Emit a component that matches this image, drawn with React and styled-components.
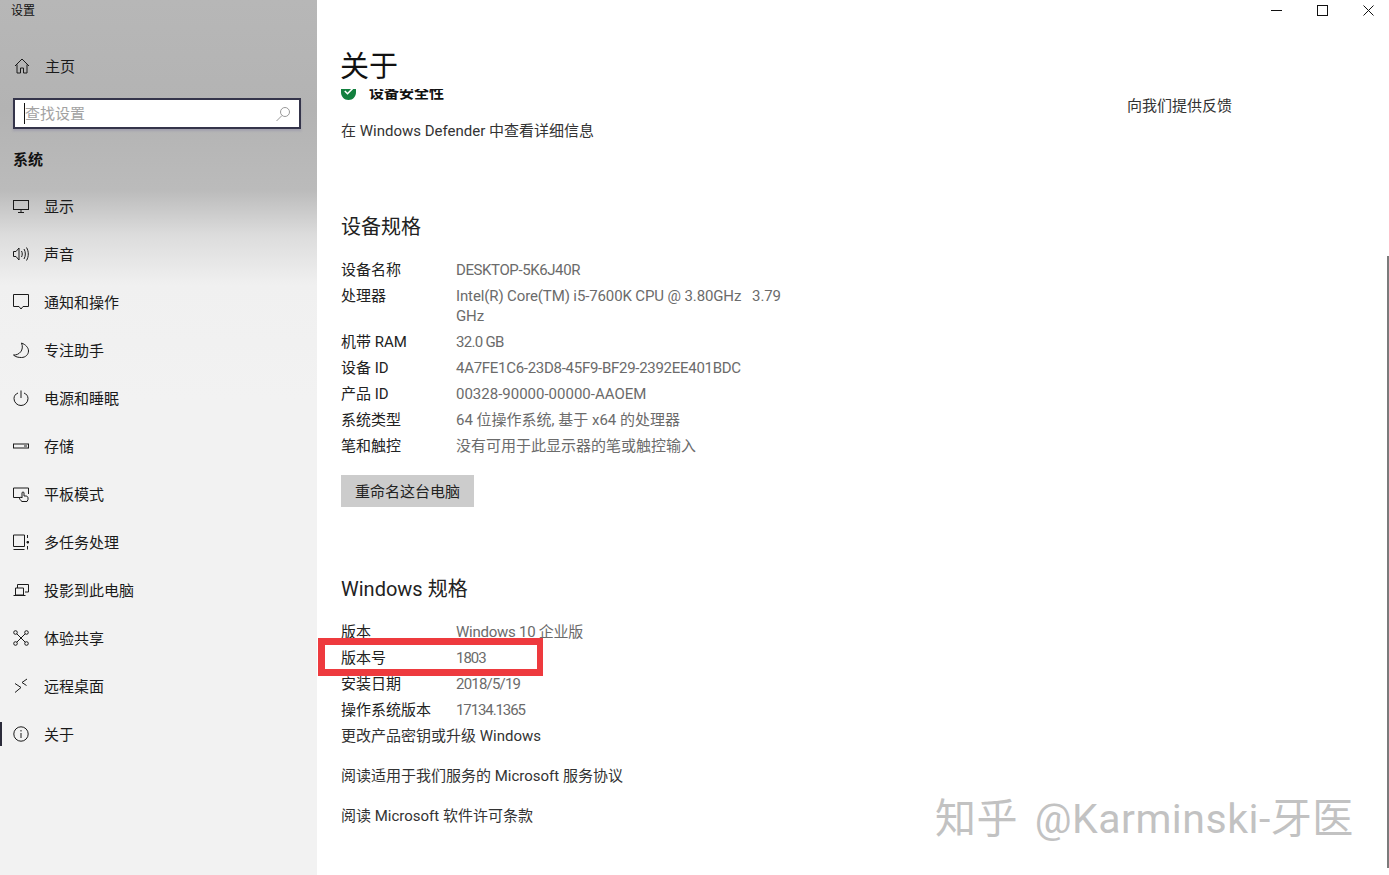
import styled, { createGlobalStyle } from "styled-components";

const GlobalStyle = createGlobalStyle`
  html, body {
    margin: 0;
    padding: 0;
    background: #fff;
  }
  body {
    font-family: "Roboto", "Noto Sans CJK SC", sans-serif;
    font-size: 15px;
    color: #222;
  }
`;

const Window = styled.div`
  position: relative;
  display: flex;
  width: 1389px;
  height: 875px;
  overflow: hidden;
  background: #fff;
`;

const Sidebar = styled.aside`
  width: 317px;
  flex: none;
  background: linear-gradient(
    180deg,
    #b7b7b7 0,
    #b3b3b3 110px,
    #bbb 190px,
    #dcdcdc 235px,
    #f0f0f0 285px,
    #f2f2f2 400px
  );
`;

const AppTitle = styled.div`
  height: 20px;
  padding-left: 11px;
  font-size: 12px;
  line-height: 22px;
  color: #111;
`;

const NavRow = styled.div`
  position: relative;
  display: flex;
  align-items: center;
  gap: 15px;
  height: 48px;
  padding-left: 13px;
  color: #1a1a1a;
  line-height: 20px;

  &::before {
    content: "";
    display: ${(p) => (p.$active ? "block" : "none")};
    position: absolute;
    left: 0;
    top: 12px;
    width: 2px;
    height: 24px;
    background: #2b2b3a;
  }
`;

const HomeRow = styled(NavRow)`
  margin-top: 22px;
  padding-left: 14px;
`;

const NavLabel = styled.span`
  padding-top: 2px;
`;

const SearchBox = styled.div`
  display: flex;
  align-items: center;
  justify-content: space-between;
  box-sizing: border-box;
  width: 288px;
  height: 31px;
  margin: 8px 0 0 13px;
  padding: 0 8px 0 10px;
  background: #fff;
  border: 2px solid #34344a;
  box-shadow: 0 2px 2px rgba(120, 115, 160, 0.3);
`;

const Placeholder = styled.span`
  border-left: 1px solid #111;
  margin-left: -1px;
  padding-top: 2px;
  font-size: 15px;
  line-height: 19px;
  color: #a2a2a2;
`;

const SearchGlyph = styled.svg`
  width: 16px;
  height: 16px;
  flex: none;
  fill: none;
  stroke: #999;
  stroke-width: 1;
`;

const GroupLabel = styled.div`
  margin: 21px 0 12px 13px;
  font-weight: 700;
  line-height: 20px;
  color: #111;
`;

const Glyph = styled.svg`
  width: 16px;
  height: 16px;
  flex: none;
  fill: none;
  stroke: currentColor;
  stroke-width: 1;
`;

const Main = styled.main`
  flex: 1;
  min-width: 0;
  display: flex;
  flex-direction: column;
`;

const TitleBar = styled.div`
  display: flex;
  justify-content: flex-end;
  height: 20px;
  margin-right: -2px;
  flex: none;
`;

const WinButton = styled.div`
  display: flex;
  align-items: center;
  justify-content: center;
  width: 46px;
  height: 20px;
  color: #111;
`;

const WinGlyph = styled.svg`
  width: 11px;
  height: 11px;
  fill: none;
  stroke: currentColor;
  stroke-width: 1;
`;

const Body = styled.div`
  display: flex;
`;

const Content = styled.div`
  width: 810px;
  flex: none;
  box-sizing: border-box;
  padding: 0 0 0 24px;
`;

const Aside = styled.div`
  margin-top: 76px;
  color: #333;
  line-height: 20px;
`;

const PageTitle = styled.h1`
  margin: 27px 0 0 -1px;
  font-size: 29px;
  font-weight: 400;
  line-height: 40px;
  color: #111;
`;

const ClippedRow = styled.div`
  display: flex;
  align-items: flex-end;
  gap: 13px;
  height: 12px;
  margin-top: 2px;
  overflow: hidden;
  font-weight: 700;
  line-height: 15px;
  color: #111;
`;

const Shield = styled.svg`
  width: 15px;
  height: 18px;
  flex: none;
`;

const LinkText = styled.div`
  margin-top: ${(p) => p.$top || 0}px;
  line-height: 20px;
  color: #333;
`;

const SectionTitle = styled.h2`
  margin: ${(p) => p.$top}px 0 19px;
  font-size: 20px;
  font-weight: 400;
  line-height: 28px;
  color: #222;
`;

const SpecList = styled.div`
  display: flex;
  flex-direction: column;
  gap: 6px;
`;

const SpecRow = styled.div`
  position: relative;
  display: grid;
  grid-template-columns: 115px 330px;
  line-height: 20px;
`;

const SpecLabel = styled.span`
  color: #222;
`;

const SpecValue = styled.span`
  color: #6b6b6b;
  white-space: pre-wrap;
  letter-spacing: ${(p) => p.$track || 0}px;
`;

const Highlight = styled.div`
  position: absolute;
  left: -23px;
  top: -10px;
  width: 225px;
  height: 38px;
  box-sizing: border-box;
  border: 7px solid #ee3a3e;
  border-right-width: 6px;
`;

const RenameButton = styled.div`
  display: inline-block;
  margin-top: 19px;
  padding: 2px 14px 0;
  background: #ccc;
  line-height: 30px;
  color: #222;
`;

const Scrollbar = styled.div`
  position: absolute;
  right: 0;
  top: 256px;
  width: 2px;
  height: 612px;
  background: #7b7b7b;
`;

const Watermark = styled.div`
  position: absolute;
  left: 935px;
  top: 793px;
  font-size: 41px;
  font-weight: 400;
  line-height: 52px;
  letter-spacing: 0.5px;
  word-spacing: 6px;
  white-space: nowrap;
  color: #c2c2c2;
  text-shadow: 1px 0 0 rgba(255, 255, 255, 0.7);
`;

const navItems = [
  {
    label: "显示",
    icon: (
      <>
        <rect x="0.5" y="2.5" width="15" height="9" />
        <path d="M8 11.5v3M5 14.5h6" />
      </>
    ),
  },
  {
    label: "声音",
    icon: (
      <>
        <path d="M0.5 5.5h2.5l3-3.5v12l-3-3.500h-2.500z" />
        <path d="M8.500 5c1 2 1 4 0 6M11 3c1.800 3 1.800 7 0 10M13.500 1.500c2.400 4 2.400 9 0 13" />
      </>
    ),
  },
  {
    label: "通知和操作",
    icon: <path d="M0.500 0.500h15v12h-5.500l-2 2.500-2-2.500h-5.500z" />,
  },
  {
    label: "专注助手",
    icon: <path d="M8.500 1c4 1.500 7 4.500 7 8 0 3.500-3 6.500-7 6.500-3 0-6-0.500-8-2.500 5.500 0.500 11-5 8-12z" />,
  },
  {
    label: "电源和睡眠",
    icon: (
      <>
        <path d="M5 3c-2.500 1-4 3-4 5.500a7 7 0 0 0 14 0c0-2.500-1.500-4.500-4-5.500" />
        <path d="M8 0.500v7.500" />
      </>
    ),
  },
  {
    label: "存储",
    icon: (
      <>
        <rect x="0.500" y="6" width="15" height="4" />
        <path d="M11 8h3" />
      </>
    ),
  },
  {
    label: "平板模式",
    icon: (
      <>
        <path d="M7 11.500H0.500v-9.500h15v6" />
        <path d="M9 15.500c-1.500-1-2.500-2.500-2.500-3.500l1.500-1 1 1V7a1 1 0 0 1 2 0v3h2c1.300 0 2 1 2 2v1.500l-1 2z" />
      </>
    ),
  },
  {
    label: "多任务处理",
    icon: (
      <>
        <path d="M0.500 1h11M0.500 1v11.500h11V1M0.500 15.500h11" />
        <path d="M14.500 1v3M14.500 12v3.500" />
        <path d="M14 7.500h1.500v1.500h-1.500z" fill="currentColor" />
      </>
    ),
  },
  {
    label: "投影到此电脑",
    icon: (
      <>
        <path d="M4.500 6V2.500h11v7.500h-3.500" />
        <path d="M2.500 6h8v7h-8zM0.500 13.500h12" />
      </>
    ),
  },
  {
    label: "体验共享",
    icon: (
      <>
        <circle cx="2.500" cy="2.500" r="1.800" />
        <circle cx="13.500" cy="2.500" r="1.800" />
        <circle cx="2.500" cy="13.500" r="1.800" />
        <circle cx="13.500" cy="13.500" r="1.800" />
        <path d="M3.800 3.800l8.400 8.400M12.200 3.800l-8.400 8.400" />
      </>
    ),
  },
  {
    label: "远程桌面",
    icon: <path d="M2 5.500l6 4-6 5M14 1l-5 3.500 4.500 3" />,
  },
  {
    label: "关于",
    active: true,
    icon: (
      <>
        <circle cx="8" cy="8" r="7.200" />
        <path d="M8 7v5M8 4v1.500" />
      </>
    ),
  },
];

// third value is the letter spacing that brings the row to the reference's width
const deviceSpecs = [
  ["设备名称", "DESKTOP-5K6J40R", -0.4],
  ["处理器", "Intel(R) Core(TM) i5-7600K CPU @ 3.80GHz   3.79 GHz", -0.12],
  ["机带 RAM", "32.0 GB", -0.7],
  ["设备 ID", "4A7FE1C6-23D8-45F9-BF29-2392EE401BDC", -0.28],
  ["产品 ID", "00328-90000-00000-AAOEM"],
  ["系统类型", "64 位操作系统, 基于 x64 的处理器"],
  ["笔和触控", "没有可用于此显示器的笔或触控输入"],
];

const windowsSpecs = [
  ["版本", "Windows 10 企业版", -0.25],
  ["版本号", "1803", -1, true],
  ["安装日期", "2018/5/19", -0.8],
  ["操作系统版本", "17134.1365", -1.1],
];

function Spec({ label, value, track, marked }) {
  return (
    <SpecRow>
      <SpecLabel>{label}</SpecLabel>
      <SpecValue $track={track}>{value}</SpecValue>
      {marked && <Highlight />}
    </SpecRow>
  );
}

export default function App() {
  return (
    <Window>
      <GlobalStyle />
      <Sidebar>
        <AppTitle>设置</AppTitle>
        <HomeRow>
          <Glyph viewBox="0 0 16 16">
            <path d="M1 8l7-7 7 7M3 6.500V15h3.500v-5h3v5H13V6.500" />
          </Glyph>
          <NavLabel>主页</NavLabel>
        </HomeRow>
        <SearchBox>
          <Placeholder>查找设置</Placeholder>
          <SearchGlyph viewBox="0 0 16 16">
            <circle cx="10" cy="6" r="4.500" />
            <path d="M7 9.500L1.500 15" />
          </SearchGlyph>
        </SearchBox>
        <GroupLabel>系统</GroupLabel>
        {navItems.map((item) => (
          <NavRow key={item.label} $active={item.active}>
            <Glyph viewBox="0 0 16 16">{item.icon}</Glyph>
            <NavLabel>{item.label}</NavLabel>
          </NavRow>
        ))}
      </Sidebar>
      <Main>
        <TitleBar>
          <WinButton>
            <WinGlyph viewBox="0 0 11 11">
              <path d="M0 5.500h11" />
            </WinGlyph>
          </WinButton>
          <WinButton>
            <WinGlyph viewBox="0 0 11 11">
              <rect x="0.500" y="0.500" width="10" height="10" />
            </WinGlyph>
          </WinButton>
          <WinButton>
            <WinGlyph viewBox="0 0 11 11">
              <path d="M0.500 0.500l10 10M10.500 0.500l-10 10" />
            </WinGlyph>
          </WinButton>
        </TitleBar>
        <Body>
          <Content>
            <PageTitle>关于</PageTitle>
            <ClippedRow>
              <Shield viewBox="0 0 15 18">
                <path d="M7.500 0L15 2v7c0 4.500-3 8-7.500 8S0 13.500 0 9V2z" fill="#13803f" />
                <path d="M3.800 8l2.700 2.700 5-5" fill="none" stroke="#fff" strokeWidth="1.600" />
              </Shield>
              <span>设备安全性</span>
            </ClippedRow>
            <LinkText $top={20}>在 Windows Defender 中查看详细信息</LinkText>

            <SectionTitle $top={72}>设备规格</SectionTitle>
            <SpecList>
              {deviceSpecs.map(([label, value, track]) => (
                <Spec key={label} label={label} value={value} track={track} />
              ))}
            </SpecList>
            <RenameButton>重命名这台电脑</RenameButton>

            <SectionTitle $top={68}>Windows 规格</SectionTitle>
            <SpecList>
              {windowsSpecs.map(([label, value, track, marked]) => (
                <Spec key={label} label={label} value={value} track={track} marked={marked} />
              ))}
            </SpecList>
            <LinkText $top={6}>更改产品密钥或升级 Windows</LinkText>
            <LinkText $top={20}>阅读适用于我们服务的 Microsoft 服务协议</LinkText>
            <LinkText $top={20}>阅读 Microsoft 软件许可条款</LinkText>
          </Content>
          <Aside>向我们提供反馈</Aside>
        </Body>
      </Main>
      <Scrollbar />
      <Watermark>知乎 @Karminski-牙医</Watermark>
    </Window>
  );
}
